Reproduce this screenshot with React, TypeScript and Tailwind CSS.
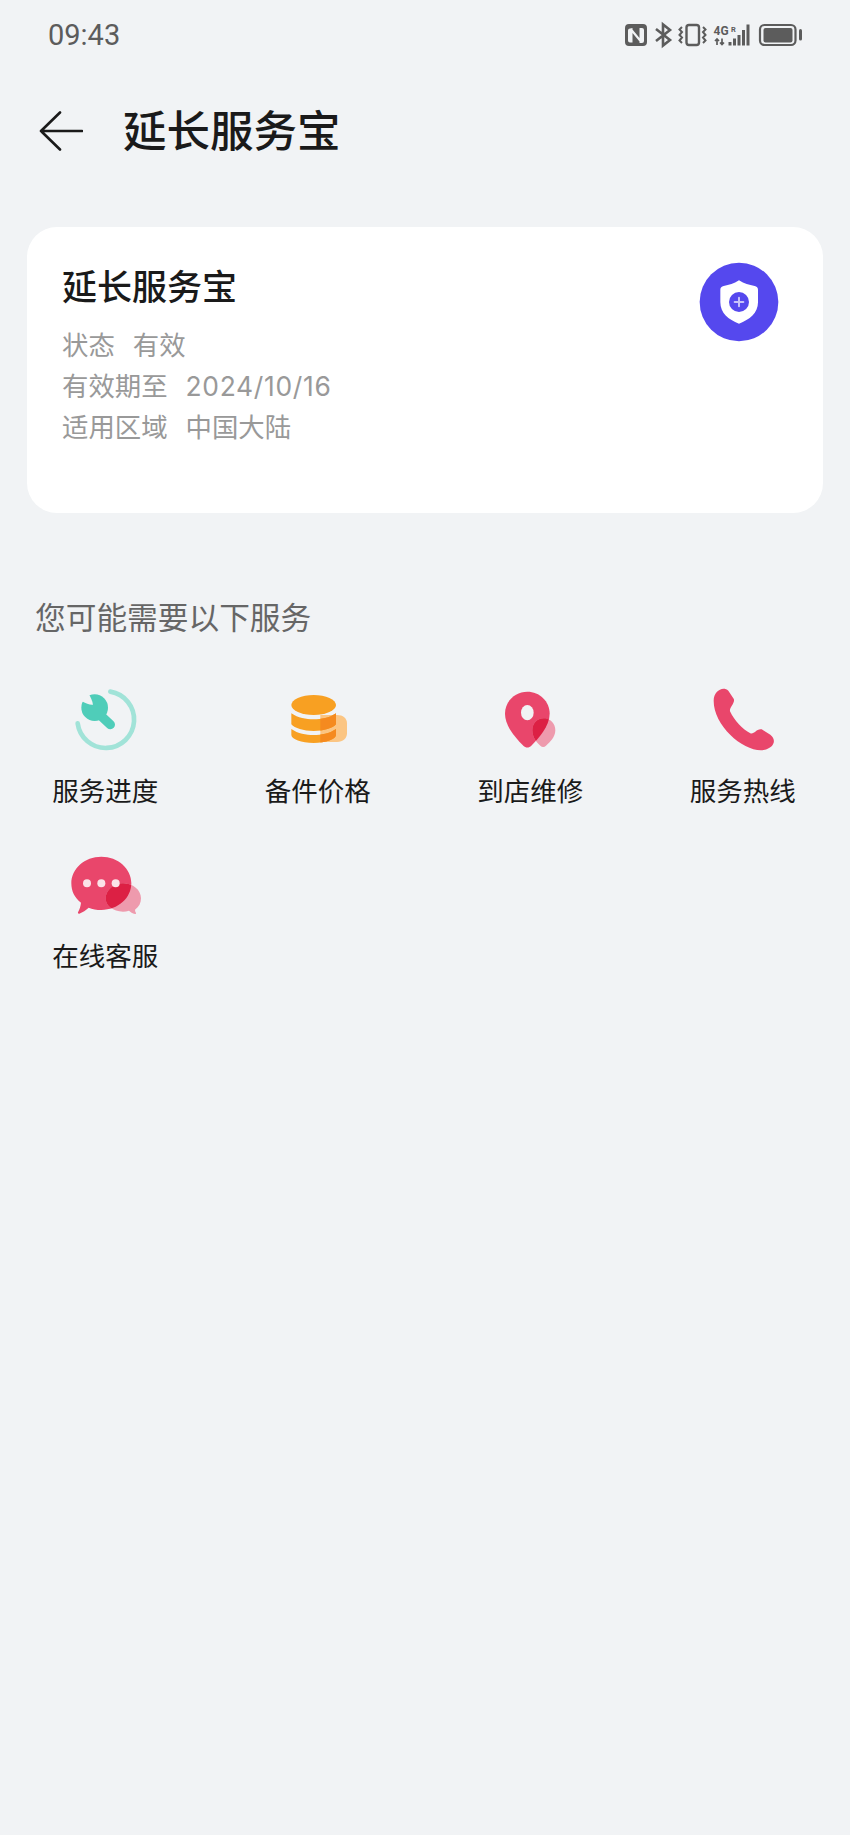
function StatusIcons() {
  return (
    <svg width="186" height="30" viewBox="620 20 186 30" className="block">
      <path fillRule="evenodd" fill="#5c5c5c" d="M629 24h14a4 4 0 0 1 4 4v14a4 4 0 0 1-4 4h-14a4 4 0 0 1-4-4V28a4 4 0 0 1 4-4Zm1 4.500a2 2 0 0 0-2 2v10a2 2 0 0 0 2 2h2.500V33l7 8.500V43H642a2 2 0 0 0 2-2V30a2 2 0 0 0-2-2h-2.500v10l-7-8.500V28Z" />
      <path fill="none" stroke="#5c5c5c" strokeWidth="2.600" d="M656 29l14 11-7 5.500V24.500l7 5.500-14 11" />
      <rect x="686.500" y="25" width="12.500" height="20" rx="2.500" fill="none" stroke="#5c5c5c" strokeWidth="2.400" />
      <path fill="none" stroke="#5c5c5c" strokeWidth="2" d="M682 27l-2.500 2.500 2.500 2.500-2.500 3 2.500 2.500-2.500 3 2.500 2.500M703 27l2.500 2.500-2.500 2.500 2.500 3-2.500 2.500 2.500 3-2.500 2.500" />
      <text x="713.500" y="35" fontFamily="Roboto, sans-serif" fontWeight="700" fontSize="12" fill="#5c5c5c">4G</text>
      <text x="731" y="31.500" fontFamily="Roboto, sans-serif" fontWeight="700" fontSize="7.500" fill="#5c5c5c">R</text>
      <path fill="none" stroke="#5c5c5c" strokeWidth="1.700" d="M717 45v-6M715 41l2-2 2 2M722 38.500v6M720 42.500l2 2 2-2" />
      <path fill="#5c5c5c" d="M728.500 42h3v3.500h-3ZM733 38.500h3v7h-3ZM737.500 35h3v10.500h-3ZM742 30h3v15.500h-3ZM746.500 24.500h3v21h-3Z" />
      <rect x="760" y="25" width="35.500" height="20" rx="4.500" fill="none" stroke="#5c5c5c" strokeWidth="2.200" />
      <rect x="763.500" y="28" width="29" height="14.500" rx="2" fill="#5c5c5c" />
      <rect x="799" y="29" width="3" height="11.500" rx="1.500" fill="#5c5c5c" />
    </svg>
  );
}

function BackArrow() {
  return (
    <svg width="44" height="40" viewBox="39 111 44 40" className="block">
      <path d="M82 131H41M60 112.500 41 131l19 18.500" fill="none" stroke="#1a1a1a" strokeWidth="2.600" strokeLinecap="round" strokeLinejoin="round" />
    </svg>
  );
}

function ShieldBadge() {
  return (
    <svg width="80" height="80" viewBox="88 65 240 240" className="block">
      <circle cx="208" cy="185" r="118" fill="#5548EE" />
      <path d="M208 120c16 10 30 14 47 17 6 1 10 5 10 11v38c0 32-25 52-57 64-32-12-56-32-56-64v-38c0-6 4-10 10-11 17-3 30-7 46-17Z" fill="#fff" />
      <circle cx="208" cy="185" r="30" fill="#5548EE" />
      <path d="M208 172v26M195 185h26" stroke="#C7C2FA" strokeWidth="6" strokeLinecap="round" />
    </svg>
  );
}

function ProgressIcon() {
  return (
    <svg width="80" height="80" viewBox="79 30 240 240" className="block">
      <path d="M212 65A85 85 0 1 1 114 160" fill="none" stroke="#A1E3D8" strokeWidth="14" strokeLinecap="round" />
      <path d="M160 115 212 164" stroke="#4FCDB9" strokeWidth="28" strokeLinecap="round" />
      <circle cx="165" cy="113" r="40" fill="#4FCDB9" />
      <path d="M124 92Q148 106 160 104 158 90 146 70L120 70Z" fill="#F1F3F5" />
    </svg>
  );
}

function PartsIcon() {
  return (
    <svg width="80" height="80" viewBox="86 30 240 240" className="block">
      <defs>
        <clipPath id="bands">
          <path d="M123 130c20 14 44 18 67 18s47-4 67-18v33c-10 12-36 20-67 20s-57-8-67-20Z" />
          <path d="M123 177c20 14 44 18 67 18s47-4 67-18v18c0 12-30 24-67 24s-67-12-67-24Z" />
        </clipPath>
      </defs>
      <path d="M210 135h50c18 0 30 10 30 25v30c0 15-12 26-30 26h-50Z" fill="#FBC583" />
      <ellipse cx="190" cy="105" rx="67" ry="30" fill="#F8A022" />
      <path d="M123 130c20 14 44 18 67 18s47-4 67-18v33c-10 12-36 20-67 20s-57-8-67-20Z" fill="#F8A022" />
      <path d="M123 177c20 14 44 18 67 18s47-4 67-18v18c0 12-30 24-67 24s-67-12-67-24Z" fill="#F8A022" />
      <rect x="210" y="125" width="50" height="95" fill="#F58A1F" clipPath="url(#bands)" />
    </svg>
  );
}

const pinBig = "M203 65c37 0 67 29 67 66 0 38-34 74-55 96-7 7-17 7-24 0-22-22-55-58-55-96 0-37 30-66 67-66Z";
const pinSmall = "M252 145c20 0 35 16 35 36 0 20-16 36-28 46-5 5-12 5-17 0-12-10-24-26-24-46 0-20 14-36 34-36Z";

function PinIcon() {
  return (
    <svg width="80" height="80" viewBox="94 30 240 240" className="block">
      <defs>
        <clipPath id="pinClip"><path d={pinBig} /></clipPath>
      </defs>
      <path d={pinBig} fill="#E9466B" />
      <path d={pinSmall} fill="#EE9AAD" />
      <path d={pinSmall} fill="#DC2044" clipPath="url(#pinClip)" />
      <ellipse cx="203" cy="128" rx="19" ry="23" fill="#F1F3F5" />
    </svg>
  );
}

function PhoneIcon() {
  return (
    <svg width="80" height="80" viewBox="71 30 240 240" className="block">
      <path d="M100 92c0-28 27-45 44-30l16 24c6 12-13 26-11 38 13 27 38 55 61 66 12 4 18-15 34-12l26 16c19 14 13 40-20 46-56 8-150-70-150-148Z" fill="#E9466B" />
    </svg>
  );
}

const bubbleBig = "M185 50c50 0 90 36 90 80s-40 80-90 80c-14 0-27-3-38-7-8 7-18 14-28 18-3 1-5-2-4-4 5-9 8-19 9-29-20-15-29-35-29-58 0-44 40-80 90-80Z";
const bubbleSmall = "M250 130c30 0 54 20 54 45 0 14-6 26-18 34 0 4 1 7 3 10 1 2-1 3-3 3-8-2-13-6-18-10-6 2-12 3-18 3-30 0-52-18-52-40s22-45 52-45Z";

function ChatIcon() {
  return (
    <svg width="80" height="80" viewBox="79 15 240 240" className="block">
      <defs>
        <clipPath id="chatClip"><path d={bubbleBig} /></clipPath>
      </defs>
      <path d={bubbleBig} fill="#E9466B" />
      <path d={bubbleSmall} fill="#EE9AAD" />
      <path d={bubbleSmall} fill="#DC2044" clipPath="url(#chatClip)" />
      <circle cx="142" cy="130" r="12" fill="#FBE3E8" />
      <circle cx="185" cy="130" r="12" fill="#FBE3E8" />
      <circle cx="228" cy="130" r="12" fill="#FBE3E8" />
    </svg>
  );
}

const services = [
  { label: "服务进度", icon: <ProgressIcon /> },
  { label: "备件价格", icon: <PartsIcon /> },
  { label: "到店维修", icon: <PinIcon /> },
  { label: "服务热线", icon: <PhoneIcon /> },
  { label: "在线客服", icon: <ChatIcon /> },
];

const rows = [
  { k: "状态", v: "有效", cls: "" },
  { k: "有效期至", v: "2024/10/16", cls: "font-['Inter',sans-serif] tracking-[0.7px]" },
  { k: "适用区域", v: "中国大陆", cls: "" },
];

export default function App() {
  return (
    <div className="w-[850px] h-[1835px] bg-[#F1F3F5] overflow-hidden font-['Noto_Sans_CJK_SC','Noto_Sans',sans-serif]">
      <div className="h-[70px] flex items-center justify-between pl-[48px] pr-[44px]">
        <span className="font-['Roboto',sans-serif] text-[29px] leading-none text-[#5c5c5c]">09:43</span>
        <StatusIcons />
      </div>
      <div className="h-[122px] flex items-center pl-[39px]">
        <BackArrow />
        <h1 className="ml-[40px] mb-[4px] text-[43.500px] leading-none font-medium text-[#1a1a1a]">延长服务宝</h1>
      </div>
      <section className="mx-[27px] mt-[35px] h-[286px] rounded-[30px] bg-white pl-[35px] pr-[44px] flex justify-between">
        <div>
          <h2 className="mt-[35px] text-[35px] leading-[46px] font-medium text-[#1a1a1a]">延长服务宝</h2>
          <dl className="mt-[15px] text-[26.400px] leading-[41px] text-[#999999]">
            {rows.map((r) => (
              <div key={r.k} className="h-[41px] flex items-baseline gap-[18px]">
                <dt>{r.k}</dt>
                <dd className={r.cls}>{r.v}</dd>
              </div>
            ))}
          </dl>
        </div>
        <div className="mt-[35px]">
          <ShieldBadge />
        </div>
      </section>
      <h3 className="mt-[83px] pl-[35px] text-[30.700px] leading-[40px] text-[#666666]">您可能需要以下服务</h3>
      <div className="mt-[44px] grid grid-cols-4">
        {services.map((s) => (
          <div key={s.label} className="h-[165px] flex flex-col items-center">
            {s.icon}
            <span className="mt-[10px] pr-[2px] text-[26.500px] leading-[40px] text-[#1a1a1a]">{s.label}</span>
          </div>
        ))}
      </div>
    </div>
  );
}
